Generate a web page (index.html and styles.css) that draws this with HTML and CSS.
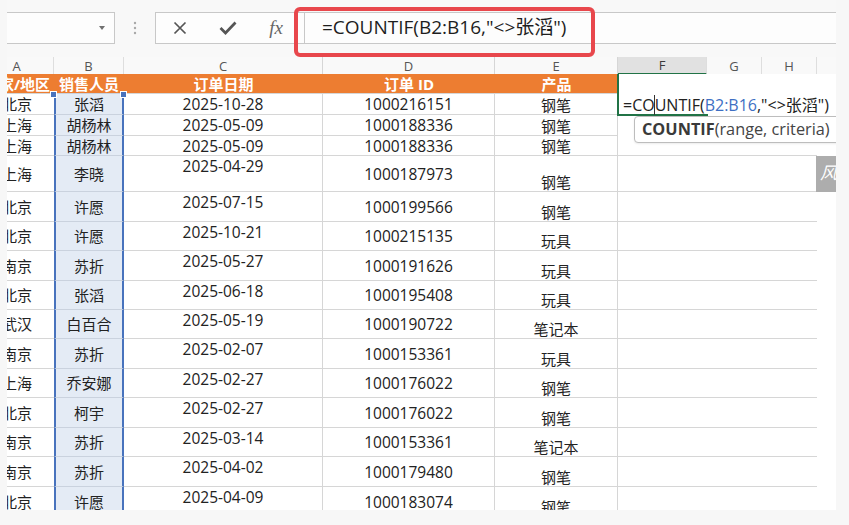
FILE: index.html
```html
<!DOCTYPE html>
<html lang="zh-CN">
<head>
    <meta charset="UTF-8">
    <title>COUNTIF</title>
    <link rel="stylesheet" href="styles.css">
</head>
<body>
    <div class="window">
        <div class="toolbar">
            <div class="namebox"><span class="caret"></span></div>
            <div class="grip">
                <svg width="4" height="14" viewBox="0 0 4 14"><circle cx="2" cy="2" r="1.2"/><circle cx="2" cy="7" r="1.2"/><circle cx="2" cy="12" r="1.2"/></svg>
            </div>
            <div class="fxbar">
                <div class="fx-buttons">
                    <span class="btn"><svg width="14" height="14" viewBox="0 0 14 14"><path d="M1.5 1.5 L12.5 12.5 M12.5 1.5 L1.5 12.5" stroke="#555" stroke-width="1.7" fill="none"/></svg></span>
                    <span class="btn"><svg width="18" height="14" viewBox="0 0 18 14"><path d="M1.5 7 L6.5 12 L16.5 1.5" stroke="#555" stroke-width="2.7" fill="none"/></svg></span>
                    <span class="btn fx">fx</span>
                </div>
                <div class="formula-input">=COUNTIF(B2:B16,"&lt;&gt;张滔")</div>
            </div>
            <div class="highlight"></div>
        </div>

        <div class="sheet">
            <div class="row colhead">
                <div class="c">A</div><div class="c">B</div><div class="c">C</div><div class="c">D</div>
                <div class="c">E</div><div class="c active-col">F</div><div class="c">G</div><div class="c">H</div><div class="c"></div>
            </div>
            <div class="row title">
                <div class="c">国家/地区</div><div class="c sel">销售人员</div><div class="c">订单日期</div><div class="c">订单 ID</div>
                <div class="c">产品</div><div class="c blank"></div><div class="c blank"></div><div class="c blank"></div><div class="c blank"></div>
            </div>

            <div class="row h21">
                <div class="c">北京</div><div class="c sel">张滔</div><div class="c date">2025-10-28</div><div class="c num">1000216151</div><div class="c prod">钢笔</div>
                <div class="c blank editing">=CO<span class="cursor"></span>UNTIF(<span class="ref">B2:B16</span>,"&lt;&gt;张滔")</div><div class="c blank"></div><div class="c blank"></div><div class="c blank"></div>
            </div>
            <div class="row h21">
                <div class="c">上海</div><div class="c sel">胡杨林</div><div class="c date">2025-05-09</div><div class="c num">1000188336</div><div class="c prod">钢笔</div>
                <div class="c blank"></div><div class="c blank"></div><div class="c blank"></div><div class="c blank"></div>
            </div>
            <div class="row h20">
                <div class="c">上海</div><div class="c sel">胡杨林</div><div class="c date">2025-05-09</div><div class="c num">1000188336</div><div class="c prod">钢笔</div>
                <div class="c"></div><div class="c"></div><div class="c"></div><div class="c blank"></div>
            </div>
            <div class="row h36">
                <div class="c">上海</div><div class="c sel">李晓</div><div class="c date">2025-04-29</div><div class="c num">1000187973</div><div class="c prod">钢笔</div>
                <div class="c"></div><div class="c"></div><div class="c"></div><div class="c blank"></div>
            </div>
            <div class="row h30">
                <div class="c">北京</div><div class="c sel">许愿</div><div class="c date">2025-07-15</div><div class="c num">1000199566</div><div class="c prod">钢笔</div>
                <div class="c"></div><div class="c"></div><div class="c"></div><div class="c blank"></div>
            </div>
            <div class="row h29">
                <div class="c">北京</div><div class="c sel">许愿</div><div class="c date">2025-10-21</div><div class="c num">1000215135</div><div class="c prod">玩具</div>
                <div class="c"></div><div class="c"></div><div class="c"></div><div class="c blank"></div>
            </div>
            <div class="row h30">
                <div class="c">南京</div><div class="c sel">苏折</div><div class="c date">2025-05-27</div><div class="c num">1000191626</div><div class="c prod">玩具</div>
                <div class="c"></div><div class="c"></div><div class="c"></div><div class="c blank"></div>
            </div>
            <div class="row h29">
                <div class="c">北京</div><div class="c sel">张滔</div><div class="c date">2025-06-18</div><div class="c num">1000195408</div><div class="c prod">玩具</div>
                <div class="c"></div><div class="c"></div><div class="c"></div><div class="c blank"></div>
            </div>
            <div class="row h29">
                <div class="c">武汉</div><div class="c sel">白百合</div><div class="c date">2025-05-19</div><div class="c num">1000190722</div><div class="c prod">笔记本</div>
                <div class="c"></div><div class="c"></div><div class="c"></div><div class="c blank"></div>
            </div>
            <div class="row h30">
                <div class="c">南京</div><div class="c sel">苏折</div><div class="c date">2025-02-07</div><div class="c num">1000153361</div><div class="c prod">玩具</div>
                <div class="c"></div><div class="c"></div><div class="c"></div><div class="c blank"></div>
            </div>
            <div class="row h29">
                <div class="c">上海</div><div class="c sel">乔安娜</div><div class="c date">2025-02-27</div><div class="c num">1000176022</div><div class="c prod">钢笔</div>
                <div class="c"></div><div class="c"></div><div class="c"></div><div class="c blank"></div>
            </div>
            <div class="row h30">
                <div class="c">北京</div><div class="c sel">柯宇</div><div class="c date">2025-02-27</div><div class="c num">1000176022</div><div class="c prod">钢笔</div>
                <div class="c"></div><div class="c"></div><div class="c"></div><div class="c blank"></div>
            </div>
            <div class="row h29">
                <div class="c">南京</div><div class="c sel">苏折</div><div class="c date">2025-03-14</div><div class="c num">1000153361</div><div class="c prod">笔记本</div>
                <div class="c"></div><div class="c"></div><div class="c"></div><div class="c blank"></div>
            </div>
            <div class="row h30">
                <div class="c">南京</div><div class="c sel">苏折</div><div class="c date">2025-04-02</div><div class="c num">1000179480</div><div class="c prod">钢笔</div>
                <div class="c"></div><div class="c"></div><div class="c"></div><div class="c blank"></div>
            </div>
            <div class="row h30">
                <div class="c">北京</div><div class="c sel">许愿</div><div class="c date">2025-04-09</div><div class="c num">1000183074</div><div class="c prod">钢笔</div>
                <div class="c"></div><div class="c"></div><div class="c"></div><div class="c blank"></div>
            </div>
        </div>

        <!-- overlays -->
        <span class="handle handle-left"></span>
        <span class="handle handle-right"></span>
        <div class="active-cell"></div>
        <div class="tip"><b>COUNTIF</b>(range, criteria)</div>
        <div class="mark">风</div>
    </div>
</body>
</html>
```

FILE: styles.css
```css
body {
    margin: 0;
    background-color: #f7f7f7;
    font-family: "Open Sans", "Noto Sans CJK SC", sans-serif;
    color: #222;
}
.window {
    position: relative;
    margin-left: 7px;
    width: 829px;
    height: 510px;
    overflow: hidden;
    background-color: #fff;
}

/* formula bar */
.toolbar {
    display: flex;
    align-items: flex-start;
    height: 57px;
    padding-top: 12px;
    box-sizing: border-box;
    background-color: #f8f8f8;
}
.namebox {
    margin-left: -3px;
    width: 111px;
    height: 32px;
    box-sizing: border-box;
    border: 1px solid #c8c8c8;
    background-color: #fdfdfd;
    display: flex;
    align-items: center;
    justify-content: flex-end;
    padding-right: 9px;
}
.caret {
    width: 0;
    height: 0;
    border-left: 3.5px solid transparent;
    border-right: 3.5px solid transparent;
    border-top: 4px solid #707070;
}
.grip {
    width: 40px;
    height: 32px;
    display: flex;
    align-items: center;
    justify-content: center;
    fill: #a8a8a8;
}
.fxbar {
    flex: 1;
    display: flex;
    height: 32px;
    margin-right: -4px;
    box-sizing: border-box;
    border: 1px solid #c8c8c8;
    background-color: #fdfdfd;
}
.fx-buttons {
    display: flex;
    width: 148px;
}
.btn {
    width: 48px;
    display: flex;
    align-items: center;
    justify-content: center;
}
.fx {
    font-family: "Liberation Serif", serif;
    font-style: italic;
    font-size: 19px;
    color: #666;
    padding-bottom: 1px;
}
.formula-input {
    flex: 1;
    border-left: 1px solid #c8c8c8;
    padding-left: 17px;
    font-size: 19px;
    line-height: 29px;
    color: #1e1e1e;
    white-space: nowrap;
}
.highlight {
    position: absolute;
    left: 287px;
    top: 7px;
    width: 301px;
    height: 50px;
    box-sizing: border-box;
    border: 4px solid #e8474c;
    border-radius: 6px;
}

/* sheet */
.row {
    display: grid;
    grid-template-columns: 74px 70px 199px 172px 123px 89px 55px 55px 40px;
    margin-left: -27px;
    box-sizing: border-box;
}
.c {
    display: flex;
    align-items: center;
    justify-content: center;
    box-sizing: border-box;
    border-bottom: 1px solid #d6d6d6;
    white-space: nowrap;
    overflow: hidden;
    font-size: 15px;
    line-height: 18px;
}
.row > .c:nth-child(3),
.row > .c:nth-child(4),
.row > .c:nth-child(5) {
    border-right: 1px solid #d6d6d6;
}
.colhead {
    height: 17px;
    background-color: #f9f9f9;
}
.colhead .c {
    border-bottom: none;
    border-right: 1px solid #dedede;
    font-size: 13px;
    color: #555;
    line-height: 15px;
    overflow: visible;
}
.colhead .active-col {
    background-color: #e1e1e1;
    border-bottom: 2px solid #217346;
    color: #3a3a3a;
    padding-top: 1px;
}
.title {
    height: 20px;
}
.title .c {
    background-color: #ed7d31;
    color: #fff;
    font-weight: bold;
    border-right: none !important;
}
.title .c.blank {
    background-color: #fff;
}
.title .c.sel {
    border-left: none;
    border-right: none;
}
.c.blank {
    border-bottom: none;
}
.h20 { height: 20px; }
.h21 { height: 21px; }
.h29 { height: 29px; }
.h30 { height: 30px; }
.h36 { height: 36px; }

.sel {
    background-color: #e4ebf5;
    border-left: 2px solid #4873bd;
    border-right: 2px solid #4873bd;
    border-bottom-color: #cad2de;
}
.title .sel {
    background-color: #ed7d31;
}
.date {
    align-items: flex-start;
    padding-top: 1px;
    font-size: 15.5px;
    line-height: 19px;
}
.num {
    font-size: 15.5px;
}
.prod {
    align-items: flex-end;
    line-height: 18px;
}
.editing {
    justify-content: flex-start;
    overflow: visible;
    padding-left: 5px;
    font-size: 16px;
    z-index: 1;
}
.ref {
    color: #3e6fc3;
}
.cursor {
    display: inline-block;
    width: 0;
    height: 20px;
    border-left: 1px solid #333;
    margin: 0 -0.5px;
    vertical-align: middle;
}

/* overlays */
.handle {
    position: absolute;
    top: 91px;
    width: 5px;
    height: 5px;
    background-color: #4873bd;
    border: 1px solid #fff;
}
.handle-left { left: 43px; }
.handle-right { left: 113px; }
.active-cell {
    position: absolute;
    left: 610px;
    top: 74px;
    width: 91px;
    height: 42px;
    box-sizing: border-box;
    border-left: 2px solid #217346;
    border-bottom: 2px solid #217346;
}
.tip {
    position: absolute;
    left: 627px;
    top: 116px;
    width: 230px;
    height: 27px;
    box-sizing: border-box;
    padding-left: 7px;
    border: 1px solid #bdbdbd;
    border-radius: 4px;
    background-color: #fff;
    font-size: 16.3px;
    line-height: 24px;
    color: #444;
    white-space: nowrap;
    box-shadow: 0 1px 2px rgba(0,0,0,0.08);
}
.tip b {
    color: #3a3a3a;
}
.mark {
    position: absolute;
    left: 809px;
    top: 156px;
    width: 24px;
    height: 36px;
    background-color: #adadad;
    color: #fff;
    font-family: "Liberation Serif", "Noto Sans CJK SC", serif;
    font-style: italic;
    font-size: 17px;
    line-height: 36px;
    padding-left: 4px;
    box-sizing: border-box;
}
```
